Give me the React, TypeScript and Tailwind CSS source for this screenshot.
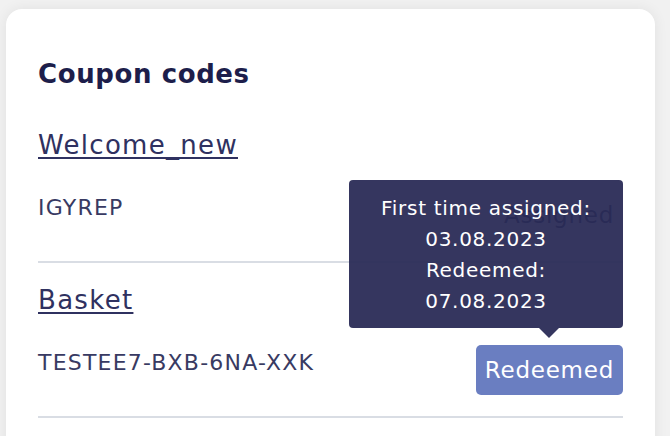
type Coupon = {
  name: string;
  code: string;
  status: "Assigned" | "Redeemed";
  tooltip?: string[];
};

const coupons: Coupon[] = [
  { name: "Welcome_new", code: "IGYREP", status: "Assigned" },
  {
    name: "Basket",
    code: "TESTEE7-BXB-6NA-XXK",
    status: "Redeemed",
    tooltip: ["First time assigned:", "03.08.2023", "Redeemed:", "07.08.2023"],
  },
];

function Tooltip({ lines }: { lines: string[] }) {
  return (
    <div className="absolute bottom-full right-0 mb-[17px] z-10">
      <div className="w-[274px] rounded-[4px] bg-[#2a2b56]/95 pt-[13px] pb-[11px] text-center text-[20px] leading-[31px] tracking-[0.7px] text-white">
        {lines.map((l) => (
          <p key={l}>{l}</p>
        ))}
      </div>
      <div className="absolute top-full right-[64px] h-0 w-0 border-x-[10px] border-t-[10px] border-x-transparent border-t-[#2a2b56]/95" />
    </div>
  );
}

function StatusBadge({ status, tooltip }: { status: Coupon["status"]; tooltip?: string[] }) {
  const redeemed = status === "Redeemed";
  return (
    <div className="relative">
      {tooltip && <Tooltip lines={tooltip} />}
      <span
        className={
          redeemed
            ? "flex h-[50px] items-center rounded-[5px] bg-[#6a7ec1] px-[9px] text-[23px] leading-[27px] tracking-[0.75px] text-white"
            : "flex h-[50px] items-center rounded-[5px] bg-white px-[9px] text-[23px] leading-[27px] tracking-[0.75px] text-[#24264d]"
        }
      >
        {status}
      </span>
    </div>
  );
}

function CouponRow({ coupon, first }: { coupon: Coupon; first: boolean }) {
  return (
    <div className={`${first ? "pt-[23px]" : "pt-[23px]"} pb-[21px] border-b-2 border-[#d9dde4]`}>
      <a className="text-[26px] leading-[29px] tracking-[1.3px] text-[#2f3160] underline decoration-[1.5px] underline-offset-[3px]">
        {coupon.name}
      </a>
      <div className="mt-[29px] flex items-start justify-between">
        <span className="mt-[5px] text-[22px] leading-[26px] tracking-[1.2px] text-[#383a62]">{coupon.code}</span>
        <StatusBadge status={coupon.status} tooltip={coupon.tooltip} />
      </div>
    </div>
  );
}

export default function App() {
  return (
    <div className="min-h-screen bg-[#f1f1f1] pt-[9px] pl-[6px] font-['DejaVu_Sans',sans-serif]">
      <div className="w-[649px] rounded-2xl bg-white px-8 pt-[50px] pb-16 shadow-[0_0_14px_rgba(0,0,0,0.07)]">
        <h2 className="mb-[19px] text-[26px] leading-[30px] font-bold tracking-[0.6px] text-[#1d1e4b]">Coupon codes</h2>
        {coupons.map((c, i) => (
          <CouponRow key={c.name} coupon={c} first={i === 0} />
        ))}
      </div>
    </div>
  );
}
